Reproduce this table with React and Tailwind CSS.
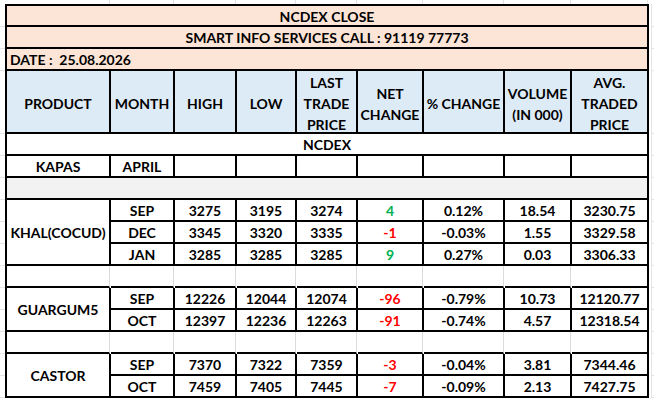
import React from 'react';

// NCDEX closing sheet, drawn as a spreadsheet-style grid
const khal = [
  { month: 'SEP', high: '3275', low: '3195', ltp: '3274', net: '4', pct: '0.12%', vol: '18.54', avg: '3230.75' },
  { month: 'DEC', high: '3345', low: '3320', ltp: '3335', net: '-1', pct: '-0.03%', vol: '1.55', avg: '3329.58' },
  { month: 'JAN', high: '3285', low: '3285', ltp: '3285', net: '9', pct: '0.27%', vol: '0.03', avg: '3306.33' },
];

const guargum = [
  { month: 'SEP', high: '12226', low: '12044', ltp: '12074', net: '-96', pct: '-0.79%', vol: '10.73', avg: '12120.77' },
  { month: 'OCT', high: '12397', low: '12236', ltp: '12263', net: '-91', pct: '-0.74%', vol: '4.57', avg: '12318.54' },
];

const castor = [
  { month: 'SEP', high: '7370', low: '7322', ltp: '7359', net: '-3', pct: '-0.04%', vol: '3.81', avg: '7344.46' },
  { month: 'OCT', high: '7459', low: '7405', ltp: '7445', net: '-7', pct: '-0.09%', vol: '2.13', avg: '7427.75' },
];

const headers = [
  ['PRODUCT'],
  ['MONTH'],
  ['HIGH'],
  ['LOW'],
  ['LAST', 'TRADE', 'PRICE'],
  ['NET', 'CHANGE'],
  ['% CHANGE'],
  ['VOLUME', '(IN 000)'],
  ['AVG.', 'TRADED', 'PRICE'],
];

// sheet row heights, used by the margin gridlines too
const rowHeights = [21, 22, 22, 63, 22, 22, 22, 22, 22, 22, 22, 22, 22, 22, 22, 22];

const Cell = ({ children, last = false, bottom = false, className = '' }) => (
  <div
    className={`flex items-center justify-center pt-[2px] border-black ${last ? '' : 'border-r-2'} ${bottom ? '' : 'border-b-2'} ${className}`}
  >
    {children}
  </div>
);

const EmptyRow = () => (
  <>
    {[0, 1, 2, 3, 4, 5, 6, 7].map((i) => (
      <div key={i} className="border-b-2 border-b-black border-r border-r-[#dcdcdc] mr-px" />
    ))}
    <div className="border-b-2 border-black" />
  </>
);

const ProductBlock = ({ name, rows, span, isLastBlock = false }) => (
  <>
    <Cell bottom={isLastBlock} className={span === 3 ? 'row-span-3' : 'row-span-2'}>
      {name}
    </Cell>
    {rows.map((r, idx) => {
      const bottom = isLastBlock && idx === rows.length - 1;
      const netColor = r.net.startsWith('-') ? 'text-[#ff0000]' : 'text-[#00b050]';
      return (
        <React.Fragment key={r.month}>
          <Cell bottom={bottom}>{r.month}</Cell>
          <Cell bottom={bottom}>{r.high}</Cell>
          <Cell bottom={bottom}>{r.low}</Cell>
          <Cell bottom={bottom}>{r.ltp}</Cell>
          <Cell bottom={bottom} className={netColor}>{r.net}</Cell>
          <Cell bottom={bottom}>{r.pct}</Cell>
          <Cell bottom={bottom}>{r.vol}</Cell>
          <Cell bottom={bottom} last>{r.avg}</Cell>
        </React.Fragment>
      );
    })}
  </>
);

// faint Excel gridlines in the margin strips
const SideLines = () => (
  <div className="flex flex-col pt-[2px]">
    {rowHeights.map((h, i) => (
      <div key={i} className="border-b border-[#e3e3e3]" style={{ height: h }} />
    ))}
  </div>
);

export default function App() {
  return (
    <div className="w-[654px] h-[402px] bg-white overflow-hidden flex flex-col">
      {/* top margin with column gridlines */}
      <div className="h-[4px] pl-[7px] grid grid-cols-[104px_64px_62px_60px_61px_66px_81px_67px_77px]">
        {[0, 1, 2, 3, 4, 5, 6, 7, 8].map((i) => (
          <div key={i} className="border-r border-[#e3e3e3] mr-px" />
        ))}
      </div>

      <div className="flex">
        <div className="w-[5px]">
          <SideLines />
        </div>

        <div
          className="w-[644px] shrink-0 border-2 border-black grid grid-cols-[104px_64px_62px_60px_61px_66px_81px_67px_75px] grid-rows-[21px_22px_22px_63px_22px_22px_22px_22px_22px_22px_22px_22px_22px_22px_22px_20px] text-black font-bold text-[14px] leading-none"
          style={{ fontFamily: 'Lato, "Liberation Sans", sans-serif' }}
        >
          {/* title rows */}
          <div className="col-span-9 bg-[#fce4d6] border-b-2 border-black flex items-center justify-center pt-[2px]">
            NCDEX CLOSE
          </div>
          <div className="col-span-9 bg-[#fce4d6] border-b-2 border-black flex items-center justify-center pt-[2px]">
            SMART INFO SERVICES CALL : 91119 77773
          </div>
          <div className="col-span-9 bg-[#fce4d6] border-b-2 border-black flex items-center pl-[3px] pt-[2px] whitespace-pre">
            DATE :  25.08.2026
          </div>

          {/* column headers */}
          {headers.map((lines, i) => (
            <div
              key={i}
              className={`bg-[#ddebf7] border-b-2 border-black flex flex-col items-center justify-center pt-[4px] leading-[21px] text-center ${i === 8 ? '' : 'border-r-2'}`}
            >
              {lines.map((l) => (
                <span key={l}>{l}</span>
              ))}
            </div>
          ))}

          <div className="col-span-9 border-b-2 border-black flex items-center justify-center pt-[2px]">
            NCDEX
          </div>

          {/* KAPAS row */}
          <Cell>KAPAS</Cell>
          <Cell>APRIL</Cell>
          <Cell />
          <Cell />
          <Cell />
          <Cell />
          <Cell />
          <Cell />
          <Cell last />

          <div className="col-span-9 bg-[#f2f2f2] border-b-2 border-black" />

          <ProductBlock name="KHAL(COCUD)" rows={khal} span={3} />
          <EmptyRow />
          <ProductBlock name="GUARGUM5" rows={guargum} span={2} />
          <EmptyRow />
          <ProductBlock name="CASTOR" rows={castor} span={2} isLastBlock />
        </div>

        <div className="w-[5px] pl-[2px]">
          <div className="h-full border-l border-[#e3e3e3]">
            <SideLines />
          </div>
        </div>
      </div>
    </div>
  );
}
